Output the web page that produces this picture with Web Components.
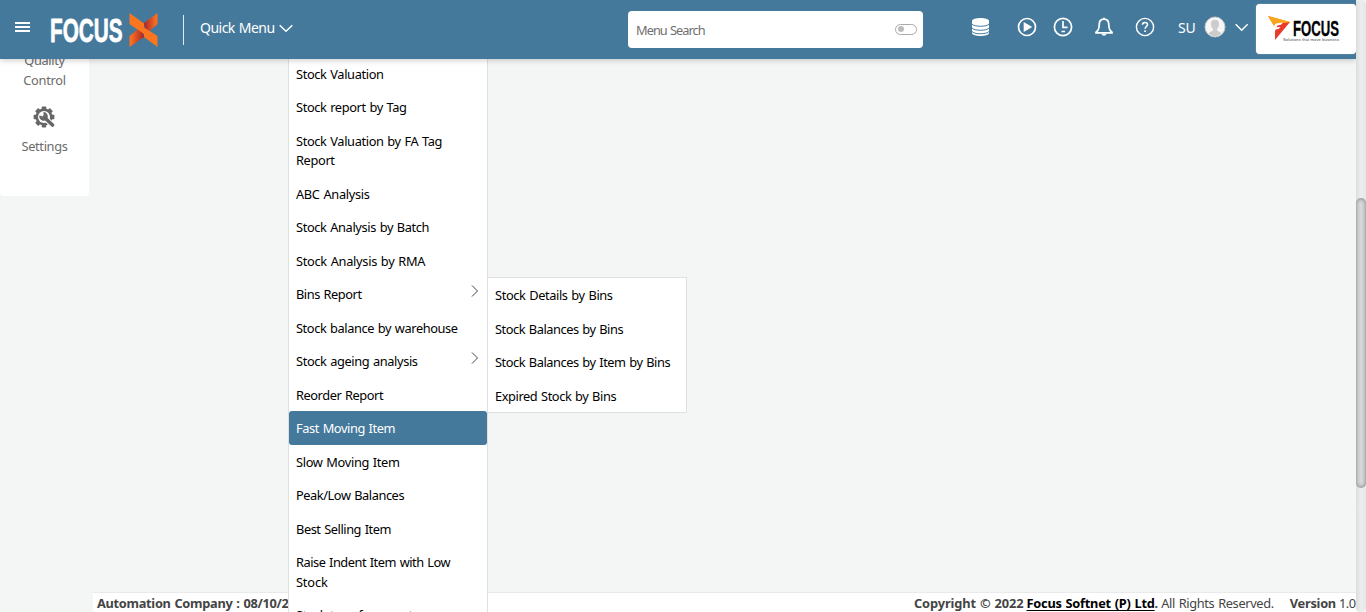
<!DOCTYPE html>
<html lang="en"><head><meta charset="utf-8"><title>Focus X</title>
<style>
html,body{margin:0;height:100%;overflow:hidden;background:#f4f6f6;font-family:"Noto Sans","Open Sans",sans-serif;font-size:12.8px;color:#000}
</style></head><body>
<focus-app></focus-app>
<script>
const define=(name,html,after)=>{
  const t=document.createElement('template');t.innerHTML=html;
  customElements.define(name,class extends HTMLElement{
    connectedCallback(){
      if(this.shadowRoot)return;
      this.attachShadow({mode:'open'}).append(t.content.cloneNode(true));
      if(after)after.call(this,this.shadowRoot);
    }
  });
};

/* A single line of text tracked to an even width. */
define('fit-text','<style>:host{display:inline-block;white-space:pre;word-spacing:.8px}</style><slot></slot>',function(){
  const w=+this.getAttribute('w'),n=this.textContent.length;
  if(w)this.style.letterSpacing=((w-.4-this.getBoundingClientRect().width)/n)+'px';
});

define('menu-item',`<style>
:host{display:flex;box-sizing:border-box;justify-content:space-between;padding:7px 7px;line-height:19.5px;border-radius:3px;flex:none}
:host([active]){background:#45799c;color:#fff}
div{display:flex;flex-direction:column;align-items:flex-start;padding-top:1px;margin-bottom:-1px}
svg{display:none;width:8px;height:12px;margin:1px 1px 0 0;fill:none;stroke:#444;stroke-width:1}
:host([sub]) svg{display:block}
</style><div><slot></slot></div><svg viewBox="0 0 8 12"><path d="M1 .5 6.5 6 1 11.5"/></svg>`);

define('menu-panel',`<style>:host{display:flex;flex-direction:column;box-sizing:border-box;width:200px;background:#fff;border:1px solid #dfe1e1}</style><slot></slot>`);

define('focus-logo',`<style>:host{display:block;width:108px;height:36px}svg{display:block;overflow:visible}text{font:bold 34px "Liberation Sans",sans-serif}</style>
<svg width="108" height="36" viewBox="0 0 108 36">
<defs><linearGradient id="b" x1="0" y1="0" x2="1" y2="0"><stop offset="0.1" stop-color="#fc6f20"/><stop offset="1" stop-color="#a82527"/></linearGradient>
<linearGradient id="c" x1="0" y1="0" x2="1" y2="0"><stop offset="0" stop-color="#a82527"/><stop offset=".9" stop-color="#fc6f20"/></linearGradient></defs>
<text x="-1" y="29.500" fill="#fff" stroke="#fff" stroke-width=".8" stroke-linejoin="round" textLength="72.500" lengthAdjust="spacingAndGlyphs">FOCUS</text>
<path fill="url(#c)" d="M106.500 1v11L95 22l-2-11Z"/><path fill="url(#b)" d="M78.500 35V24l12.500-10 2 11Z"/>
<path fill="#fc761f" d="M78.500 1 93 11.500v4L106.500 24v11L93 25v-3L78.500 12Z"/>
</svg>`);

define('brand-card',`<style>:host{display:block;box-sizing:border-box;width:100px;height:50px;background:#fff;border-radius:4px;box-shadow:0 0 1px #d5e0e8}svg{display:block}</style>
<svg width="100" height="50" viewBox="0 0 100 50">
<path fill="#f7a51e" d="m12 12 22 6-8 7-8-3Z"/><path fill="#e93a2c" d="m34 18-15 18V20Z"/><path fill="#f7a51e" d="m12 12 22 6-13 1.500-3 2.500Z"/><path fill="#fff" d="m17 23 3-3.500 7-1-2 2.200-3.500.8-1 1.800 4-.4-2 2-3 .6-1 4-1-3.500Z"/>
<text x="37" y="31.500" stroke="#000" stroke-width=".3" stroke-linejoin="round" textLength="46" lengthAdjust="spacingAndGlyphs" style="font:bold 22px 'Liberation Sans',sans-serif">FOCUS</text>
<text x="27" y="37" fill="#444" textLength="56" lengthAdjust="spacing" style="font:4px 'Liberation Sans',sans-serif">Solutions that move business</text>
</svg>`);

define('search-box',`<style>:host{display:flex;align-items:center;justify-content:space-between;box-sizing:border-box;width:295px;height:37px;padding:0 6px 0 8px;background:#fff;border-radius:4px;color:#6f6f6f}
i{display:block;box-sizing:border-box;width:22px;height:11px;border:1px solid #aaa;border-radius:6px;margin-top:-1px;padding:1.5px}i:before{content:"";display:block;width:6px;height:6px;border-radius:50%;background:#bbb}</style>
<fit-text w="69">Menu Search</fit-text><i></i>`);

define('top-bar',`<style>
:host{display:flex;box-sizing:border-box;width:1356px;height:59px;background:#45799c;color:#fff;box-shadow:0 1px 6px rgba(0,0,0,.22);align-items:flex-start}
:host>*{flex:none}svg{display:block;fill:none;stroke:#fff}
.burger{margin:21px 0 0 15px}.logo{margin:12px 0 0 21px}
.rule{width:1px;height:30px;background:#dfe9ef;margin:15px 0 0 24px}
.q{display:flex;box-sizing:border-box;width:93px;justify-content:space-between;align-items:center;margin:18px 0 0 16px;font-size:14px;line-height:20px}
search-box{margin:11px 0 0 335px}
.ic{display:flex;margin:17px 0 0 48px}
.user{display:flex;align-items:center;margin:15px 0 0 23px;height:24px}
.user svg+svg{margin-left:9px}
brand-card{margin:4px 0 0 auto}
</style>
<svg class="burger" width="15" height="12" stroke-width="2"><path d="M0 2h15M0 6h15M0 10h15"/></svg>
<focus-logo class="logo"></focus-logo><div class="rule"></div>
<div class="q"><fit-text w="75">Quick Menu</fit-text><svg width="14" height="9" stroke-width="1.5"><path d="m.7 1.2 6.3 6 6.3-6"/></svg></div>
<search-box></search-box>
<div class="ic">
<svg width="19" height="20"><path fill="#fff" stroke="none" d="M1 4C1 0 18 0 18 4v12c0 4-17 4-17 0Z"/><path stroke="#45799c" d="M1 7c2 3 15 3 17 0M1 11c2 3 15 3 17 0M1 14.5c2 3 15 3 17 0"/></svg>
<svg width="20" height="20" style="margin-left:27px" stroke-width="1.7"><circle cx="10" cy="10" r="8.5"/><path fill="#fff" stroke="none" d="m6.7 5 8.5 5-8.5 5Z"/></svg>
<svg width="20" height="20" style="margin-left:16px" stroke-width="1.7"><circle cx="10" cy="10" r="8.6"/><path d="M10 4v6.3h4.5M8.5 14.5h3.5"/></svg>
<svg width="20" height="20" style="margin-left:21px" stroke-width="1.700"><path d="M10 2.2c-3.4 0-4.8 2.6-4.8 5.6 0 3.4-.8 5.9-3.2 7.4v.7h16v-.7c-2.4-1.5-3.2-4-3.2-7.4 0-3-1.4-5.6-4.8-5.6Z"/><path d="M10 .8v1.6"/><path fill="#fff" stroke="none" d="M7.5 16.5h5c-.3 3-4.7 3-5 0Z"/></svg>
<svg width="20" height="20" style="margin-left:21px" stroke-width="1.4"><circle cx="10" cy="10" r="8.6"/><path stroke-width="1.6" d="M7.5 7.8c0-3.2 5-3 5-.3 0 2-2.4 2-2.4 4.3M10.1 13.2v1.7"/></svg>
</div>
<div class="user"><fit-text w="18" style="font-size:14px;margin-right:8px">SU</fit-text>
<svg width="22" height="22" stroke="none"><circle cx="11" cy="11" r="10" fill="#f7f7f7" stroke="#c9c9c9"/><path stroke="none" fill="#ccc" d="M11 3.8c-3 0-4.3 2-4 4.7.2 2 .8 3.3 1.9 4.2v1.8L4.5 17c3.2 4.4 9.8 4.4 13 0L13 14.500v-1.8c1.200-.9 1.800-2.200 2-4.200.3-2.700-1-4.700-4-4.700Z"/></svg>
<svg width="14" height="9" stroke-width="1.500"><path d="m.7 1.200 6 6 6-6"/></svg></div>
<brand-card></brand-card>`);

define('side-bar',`<style>:host{display:flex;flex-direction:column;align-items:center;box-sizing:border-box;width:89px;height:146px;background:#fff;border-radius:0 0 4px 4px;color:#6b6b6b;line-height:20px}
svg{display:block;margin:16px 1px 8px 0}</style>
<fit-text w="41">Quality</fit-text><fit-text w="43">Control</fit-text>
<svg width="22" height="22" viewBox="-11 -11 22 22"><g fill="#666"><circle r="8.500"/><g><rect x="-2.300" y="-10.400" width="4.600" height="20.800" rx=".8"/><rect x="-10.400" y="-2.300" width="20.800" height="4.600" rx=".8"/></g><g transform="rotate(45)"><rect x="-2.300" y="-10.400" width="4.600" height="20.800" rx=".8"/><rect x="-10.400" y="-2.300" width="20.800" height="4.600" rx=".8"/></g></g><circle r="6" fill="#fff"/>
<path d="m0 0 10 9.500" stroke="#fff" stroke-width="5.500"/><path d="m0 0 8.500 8" stroke="#666" stroke-width="3.600" stroke-linecap="round"/><path d="M-3.400-1.300A3 3 0 1 0-.5-3.600" fill="none" stroke="#666" stroke-width="2.600"/></svg>
<fit-text w="46.500">Settings</fit-text>`);

define('page-footer',`<style>:host{display:flex;box-sizing:border-box;width:1263px;height:20px;background:#fff;border-top:1px solid #e9ebeb;color:#444;line-height:21px;padding:0 .5px 0 4px;white-space:pre}
b,u{font-weight:700}u{color:#000;text-underline-offset:2px}.r{display:flex;margin-left:auto}</style>
<fit-text w="192"><b>Automation Company : 08/10/2</b></fit-text>
<div class="r"><fit-text w="110" style="margin-right:3px"><b>Copyright © 2022</b></fit-text><fit-text w="128.500"><u><b>Focus Softnet (P) Ltd</b></u></fit-text><b style="margin-right:3px">.</b><fit-text w="113">All Rights Reserved.</fit-text><fit-text w="46.500" style="margin:0 3px 0 16px"><b>Version</b></fit-text><fit-text w="17">1.0</fit-text></div>`);

define('scroll-track',`<style>:host{display:flex;width:10px;height:612px;background:linear-gradient(90deg,#dcdede,#eceeee 50%,#e6e8e8);border-radius:5px}
i{width:10px;height:290px;margin-top:198px;border-radius:5px;background:#d8d8d8;box-shadow:inset 0 0 4px rgba(0,0,0,.45)}</style><i></i>`);

define('focus-app',`<style>
:host{display:grid;grid-template:59px 533px 20px/89px 4px 195px 200px 1fr 10px;width:1366px;height:612px;overflow:hidden}
top-bar{grid-area:1/1/2/6;z-index:5}
scroll-track{grid-area:1/6/4/7;z-index:6}
side-bar{grid-area:2/1;margin-top:-9px}
page-footer{grid-area:3/2/4/6;justify-self:end}
.m{grid-area:1/4/4/5;z-index:2;margin-top:55.800px;height:570px}
.s{grid-area:1/5/3/6;z-index:1;align-self:start;margin-top:277px;margin-left:-1px}
</style>
<top-bar></top-bar><side-bar></side-bar>
<menu-panel class="m">
<menu-item><fit-text w="88">Stock Valuation</fit-text></menu-item>
<menu-item><fit-text w="111">Stock report by Tag</fit-text></menu-item>
<menu-item><fit-text w="146.500">Stock Valuation by FA Tag</fit-text><fit-text w="39">Report</fit-text></menu-item>
<menu-item><fit-text w="74">ABC Analysis</fit-text></menu-item>
<menu-item><fit-text w="133.500">Stock Analysis by Batch</fit-text></menu-item>
<menu-item><fit-text w="129.500">Stock Analysis by RMA</fit-text></menu-item>
<menu-item sub><fit-text w="66">Bins Report</fit-text></menu-item>
<menu-item><fit-text w="162">Stock balance by warehouse</fit-text></menu-item>
<menu-item sub><fit-text w="122">Stock ageing analysis</fit-text></menu-item>
<menu-item><fit-text w="87.500">Reorder Report</fit-text></menu-item>
<menu-item active><fit-text w="99.500">Fast Moving Item</fit-text></menu-item>
<menu-item><fit-text w="104">Slow Moving Item</fit-text></menu-item>
<menu-item><fit-text w="108.500">Peak/Low Balances</fit-text></menu-item>
<menu-item><fit-text w="95.500">Best Selling Item</fit-text></menu-item>
<menu-item><fit-text w="154.500">Raise Indent Item with Low</fit-text><fit-text w="32">Stock</fit-text></menu-item>
<menu-item><fit-text w="117">Stock transfer report</fit-text></menu-item>
</menu-panel>
<menu-panel class="s">
<menu-item><fit-text w="118">Stock Details by Bins</fit-text></menu-item>
<menu-item><fit-text w="128.500">Stock Balances by Bins</fit-text></menu-item>
<menu-item><fit-text w="175.500">Stock Balances by Item by Bins</fit-text></menu-item>
<menu-item><fit-text w="121.500">Expired Stock by Bins</fit-text></menu-item>
</menu-panel>
<page-footer></page-footer><scroll-track></scroll-track>`);
</script></body></html>
